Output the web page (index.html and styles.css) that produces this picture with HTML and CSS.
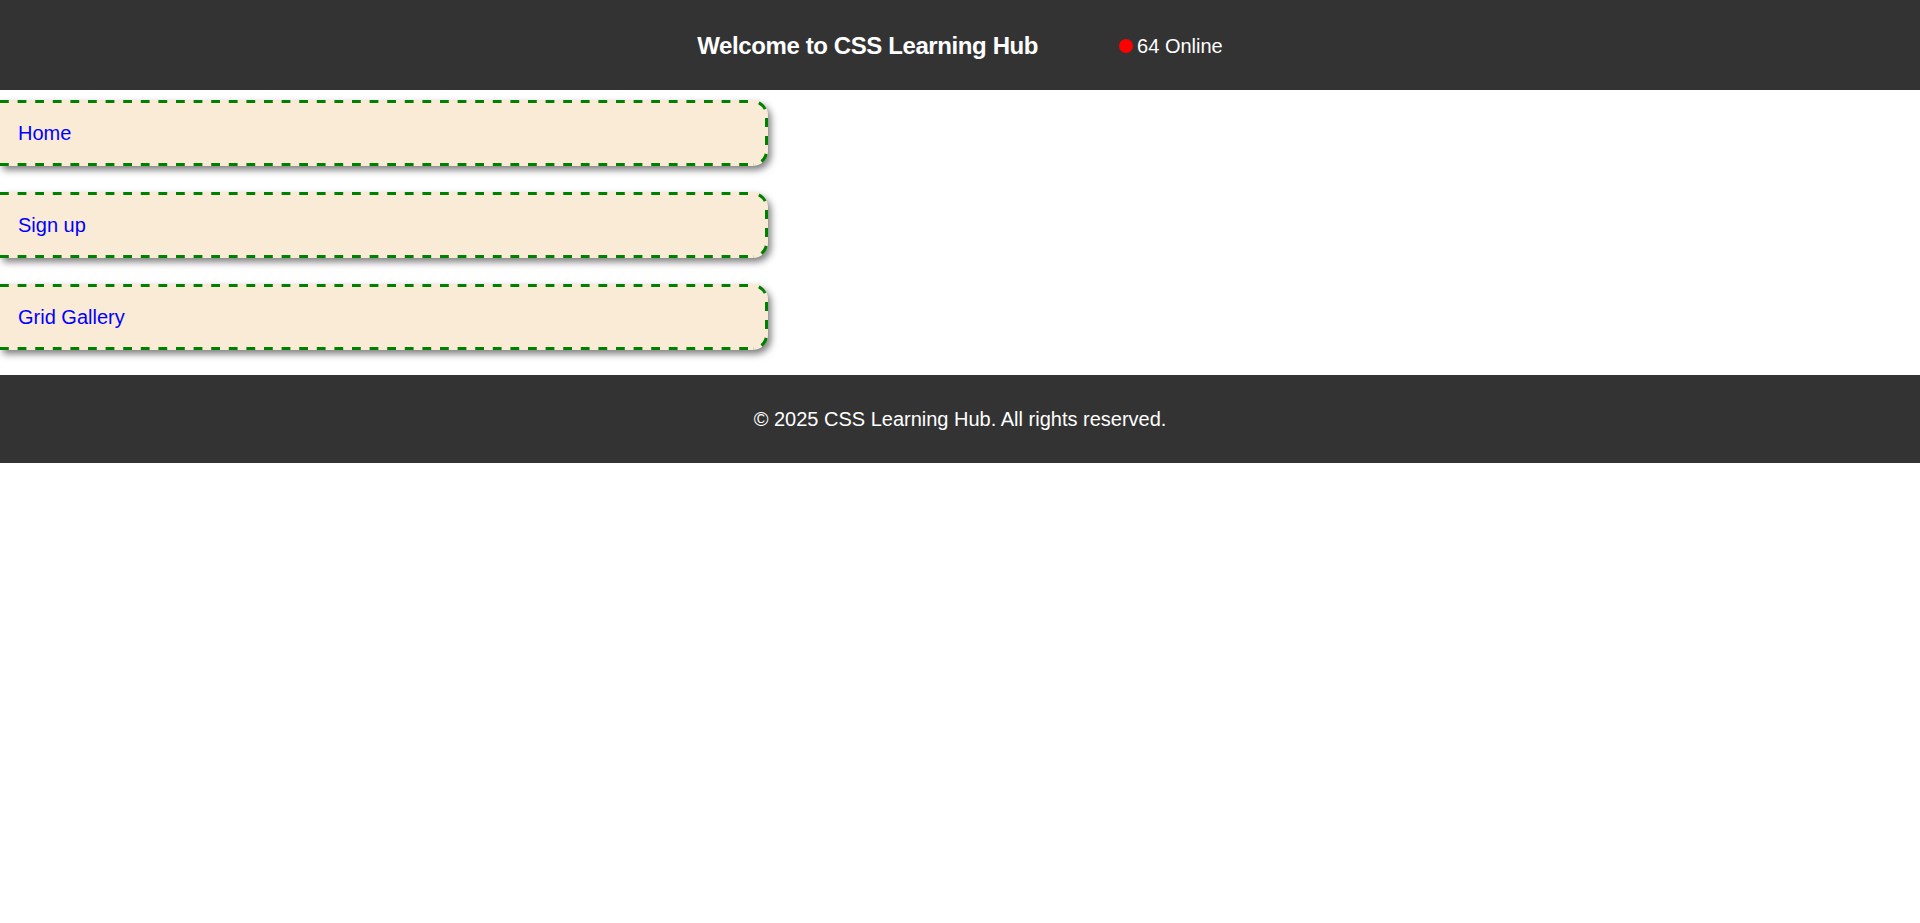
FILE: index.html
```html
<!DOCTYPE html>
<html lang="en">
<head>
<meta charset="UTF-8">
<title>CSS Learning Hub</title>
<link rel="stylesheet" href="styles.css">
</head>
<body>
<header class="site-header">
  <h1 class="site-title">Welcome to CSS Learning Hub</h1>
  <div class="online"><span class="online-dot"></span><span class="online-text">64 Online</span></div>
</header>
<nav class="site-nav">
  <ul class="nav-list">
    <li class="nav-item">
      <svg class="card-border" width="768" height="66" aria-hidden="true">
        <line class="edge" x1="0" y1="1.5" x2="753" y2="1.5"/>
        <line class="edge" x1="0" y1="64.5" x2="753" y2="64.5"/>
        <path class="corner" d="M753 1.5 A13.5 13.5 0 0 1 766.5 15 V51 A13.5 13.5 0 0 1 753 64.5"/>
      </svg>
      <a class="nav-link" href="#">Home</a>
    </li>
    <li class="nav-item">
      <svg class="card-border" width="768" height="66" aria-hidden="true">
        <line class="edge" x1="0" y1="1.5" x2="753" y2="1.5"/>
        <line class="edge" x1="0" y1="64.5" x2="753" y2="64.5"/>
        <path class="corner" d="M753 1.5 A13.5 13.5 0 0 1 766.5 15 V51 A13.5 13.5 0 0 1 753 64.5"/>
      </svg>
      <a class="nav-link" href="#">Sign up</a>
    </li>
    <li class="nav-item">
      <svg class="card-border" width="768" height="66" aria-hidden="true">
        <line class="edge" x1="0" y1="1.5" x2="753" y2="1.5"/>
        <line class="edge" x1="0" y1="64.5" x2="753" y2="64.5"/>
        <path class="corner" d="M753 1.5 A13.5 13.5 0 0 1 766.5 15 V51 A13.5 13.5 0 0 1 753 64.5"/>
      </svg>
      <a class="nav-link" href="#">Grid Gallery</a>
    </li>
  </ul>
</nav>
<footer class="site-footer">
  <p class="footer-text">&copy; 2025 CSS Learning Hub. All rights reserved.</p>
</footer>
</body>
</html>
```

FILE: styles.css
```css
html, body {
  margin: 0;
  padding: 0;
  background: #ffffff;
  font-family: "Liberation Sans", Arial, sans-serif;
}

.site-header {
  height: 90px;
  background: #333333;
  color: #ffffff;
  display: flex;
  align-items: center;
  justify-content: center;
  gap: 81px;
}

.site-title {
  margin: 0;
  font-size: 24px;
  font-weight: bold;
  line-height: 28px;
  letter-spacing: -0.4px;
  padding-top: 2px;
}

.online {
  display: flex;
  align-items: center;
  font-size: 20px;
  line-height: 23px;
  padding-top: 2px;
}

.online-dot {
  width: 14px;
  height: 14px;
  border-radius: 50%;
  background: #ff0000;
  margin-right: 4px;
}

.site-nav {
  padding: 10px 0 25px;
}

.nav-list {
  list-style: none;
  margin: 0;
  padding: 0;
  display: flex;
  flex-direction: column;
  gap: 26px;
}

.nav-item {
  position: relative;
  width: 40%;
  height: 66px;
  box-sizing: border-box;
  background: #faebd7;
  border-radius: 0 15px 15px 0;
  box-shadow: 3px 4px 7px rgba(0, 0, 0, 0.5);
  padding: 21px 18px;
  font-size: 20px;
  line-height: 24px;
}

.card-border {
  position: absolute;
  left: 0;
  top: 0;
  overflow: visible;
  pointer-events: none;
}

.card-border .edge,
.card-border .corner {
  fill: none;
  stroke: #008000;
  stroke-width: 3;
}

.card-border .edge {
  stroke-dasharray: 8.8 8.8;
}

.card-border .corner {
  stroke-dasharray: 9 9;
  stroke-dashoffset: 12;
}

.nav-link {
  position: relative;
  color: #0000ff;
  text-decoration: none;
}

.site-footer {
  background: #333333;
  color: #ffffff;
  text-align: center;
  padding: 32px 0;
}

.footer-text {
  margin: 0;
  font-size: 20px;
  line-height: 24px;
}
```
